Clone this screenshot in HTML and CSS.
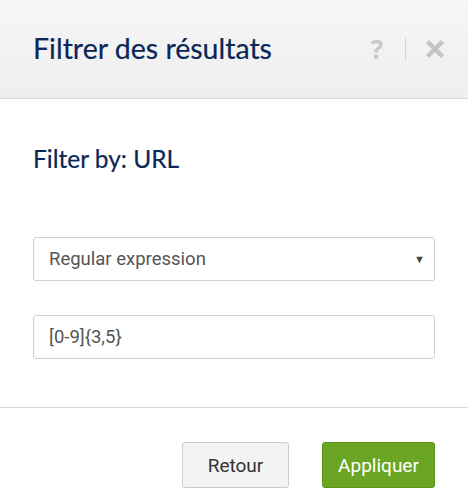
FILE: index.html
```html
<!DOCTYPE html>
<html lang="fr">
<head>
<meta charset="utf-8">
<title>Filtrer des résultats</title>
<link rel="stylesheet" href="styles.css">
</head>
<body>
<div class="dialog">
  <header class="dlg-header">
    <h1 class="dlg-title">Filtrer des résultats</h1>
    <div class="dlg-tools">
      <span class="tool-help">?</span>
      <span class="tool-sep"></span>
      <svg class="tool-close" width="20" height="20" viewBox="0 0 20 20" aria-hidden="true">
        <path d="M2.5 2.5 L17.5 17.5 M17.5 2.5 L2.5 17.5" stroke="#c4c4c4" stroke-width="4.5" stroke-linecap="butt"/>
      </svg>
    </div>
  </header>
  <section class="dlg-body">
    <h2 class="filter-label">Filter by: URL</h2>
    <div class="field select-field">
      <span class="field-text">Regular expression</span>
      <span class="select-arrow">&#9660;</span>
    </div>
    <div class="field input-field">
      <span class="field-text">[0-9]{3,5}</span>
    </div>
  </section>
  <footer class="dlg-footer">
    <button class="btn btn-back">Retour</button>
    <button class="btn btn-apply">Appliquer</button>
  </footer>
</div>
</body>
</html>
```
FILE: styles.css
```css
html, body {
  margin: 0;
  padding: 0;
  background: #ffffff;
}
.dialog {
  width: 468px;
  height: 500px;
  background: #fff;
  font-family: Roboto, "Liberation Sans", sans-serif;
}
.dlg-header {
  height: 98px;
  display: flex;
  align-items: center;
  justify-content: space-between;
  padding: 0 23px 0 33px;
  background: linear-gradient(#f6f6f6, #eeeeee);
  border-bottom: 1px solid #d9d9d9;
}
.dlg-title {
  margin: 0;
  font-family: Lato, "Noto Sans", sans-serif;
  font-weight: 400;
  font-size: 28.5px;
  color: #0b2756;
  -webkit-text-stroke: 0.2px #0b2756;
  padding-bottom: 2px;
}
.dlg-tools {
  display: flex;
  align-items: center;
}
.tool-help {
  font-family: "Open Sans", sans-serif;
  font-weight: 700;
  font-size: 26px;
  line-height: 30px;
  color: #c8c8c8;
  width: 16px;
  text-align: center;
}
.tool-sep {
  width: 1px;
  height: 22px;
  background: #d4d4d4;
  margin: 0 19px 0 20px;
}
.tool-close {
  display: block;
}
.dlg-body {
  padding: 45px 33px 48px;
}
.filter-label {
  margin: 0 0 63px;
  font-family: Lato, "Noto Sans", sans-serif;
  font-weight: 400;
  font-size: 24.5px;
  line-height: 30px;
  color: #0b2756;
  -webkit-text-stroke: 0.2px #0b2756;
}
.field {
  height: 42px;
  border: 1px solid #cfcfcf;
  border-radius: 3px;
  display: flex;
  align-items: center;
  justify-content: space-between;
  padding: 0 9px 0 15px;
  font-size: 18.5px;
  color: #555;
}
.select-field {
  margin-bottom: 34px;
}
.select-arrow {
  font-size: 11px;
  color: #444;
}
.dlg-footer {
  border-top: 1px solid #d9d9d9;
  display: flex;
  justify-content: flex-end;
  gap: 33px;
  padding: 34px 33px 0;
}
.btn {
  font-family: Roboto, "Liberation Sans", sans-serif;
  font-size: 19px;
  height: 46px;
  border-radius: 3px;
  cursor: pointer;
}
.btn-back {
  width: 107px;
  background: #f3f3f3;
  border: 1px solid #cccccc;
  color: #333;
}
.btn-apply {
  width: 113px;
  background: #6aa624;
  border: 1px solid #5a9419;
  color: #fff;
}
```
